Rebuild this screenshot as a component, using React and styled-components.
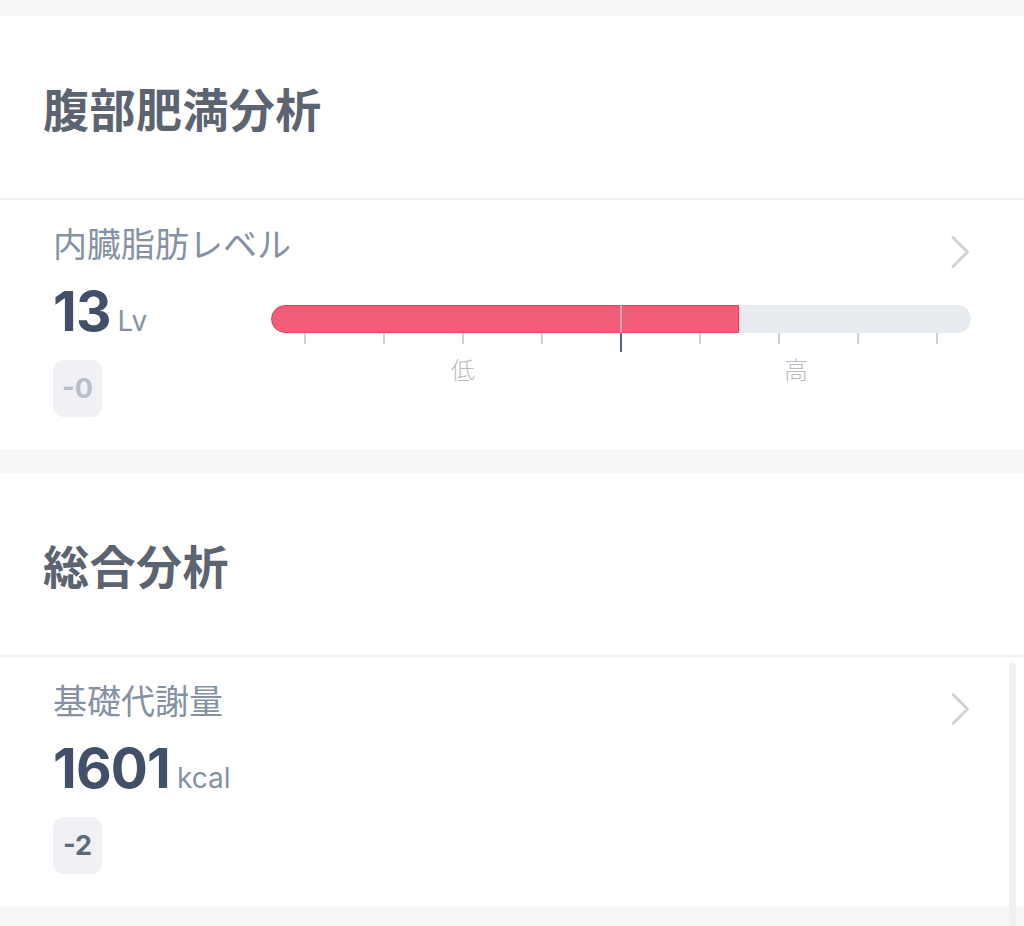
import React from "react";
import styled, { createGlobalStyle } from "styled-components";

const GlobalStyle = createGlobalStyle`
  html, body {
    margin: 0;
    padding: 0;
    background: #fff;
  }
  body {
    font-family: Inter, "Noto Sans CJK JP", sans-serif;
    -webkit-font-smoothing: antialiased;
  }
`;

const Page = styled.div`
  width: 1024px;
  display: flex;
  flex-direction: column;
  background: #fff;
`;

const Gap = styled.div`
  height: ${(props) => props.h}px;
  background: #f5f6f8;
`;

const SectionHeader = styled.div`
  height: 182px;
  display: flex;
  align-items: center;
  padding-left: 43px;
  font-size: 46px;
  font-weight: 700;
  color: #5b6470;
  letter-spacing: 0.01em;
`;

const Divider = styled.div`
  height: 2px;
  background: #eef0f3;
`;

const Card = styled.div`
  height: 250px;
  box-sizing: border-box;
  padding: 23px 53px 0 53px;
  display: flex;
  flex-direction: column;
`;

const CardTop = styled.div`
  display: flex;
  align-items: flex-start;
  justify-content: space-between;
  height: 44px;
`;

const Label = styled.div`
  font-size: 34px;
  font-weight: 400;
  color: #8592a4;
  line-height: 44px;
`;

const ChevronBox = styled.div`
  margin-top: 12px;
  margin-right: -1px;
  display: flex;
`;

const Body = styled.div`
  margin-top: 14px;
  display: flex;
`;

const ValueCol = styled.div`
  width: 218px;
  display: flex;
  flex-direction: column;
  align-items: flex-start;
`;

const Value = styled.div`
  display: flex;
  align-items: baseline;
  line-height: 60px;
  height: 60px;
`;

const Number = styled.span`
  font-size: 55px;
  font-weight: 700;
  color: #424f68;
  letter-spacing: -0.015em;
`;

const Unit = styled.span`
  margin-left: 7px;
  font-size: 28px;
  font-weight: 400;
  color: #8592a4;
`;

const Badge = styled.div`
  margin-top: 19px;
  width: 49px;
  height: 57px;
  border-radius: 11px;
  background: #eff1f4;
  display: flex;
  align-items: center;
  justify-content: center;
  font-size: 27px;
  font-weight: 700;
  color: ${(props) => (props.muted ? "#b8bfc9" : "#5d6a7d")};
`;

const Scale = styled.div`
  flex: 1;
  padding-top: 24px;
`;

const Track = styled.div`
  position: relative;
  height: 28px;
  border-radius: 14px;
  background: #e8ebf0;
  overflow: hidden;
`;

const Fill = styled.div`
  height: 100%;
  box-sizing: border-box;
  background: #f25e78;
  border: 1px solid #e6405f;
  border-radius: 14px 0 0 14px;
`;

const Marker = styled.div`
  position: absolute;
  top: 0;
  bottom: 0;
  width: 2px;
  margin-left: -1px;
  background: #f8a9b8;
`;

const Ticks = styled.div`
  display: flex;
  justify-content: space-between;
  align-items: flex-start;
  padding: 0 33px;
  height: 20px;
`;

const Tick = styled.div`
  width: 2px;
  height: ${(props) => (props.current ? 19 : 11)}px;
  background: ${(props) => (props.current ? "#56627a" : "#cdd1d7")};
`;

const ScaleLabels = styled.div`
  position: relative;
  height: 34px;
  margin-top: 1px;
`;

const ScaleLabel = styled.span`
  position: absolute;
  top: 0;
  transform: translateX(-50%);
  font-size: 24px;
  font-weight: 300;
  color: #b7bdc7;
  line-height: 34px;
`;

const ScrollThumb = styled.div`
  position: fixed;
  right: 8px;
  top: 663px;
  bottom: -10px;
  width: 7px;
  border-radius: 4px;
  background: #f0f0f2;
`;

const Chevron = () => (
  <svg width="22" height="34" viewBox="0 0 22 34">
    <path
      d="M3 2.5 L17.5 17 L3 31.5"
      fill="none"
      stroke="#cfd3d9"
      strokeWidth="3"
      strokeLinecap="round"
      strokeLinejoin="round"
    />
  </svg>
);

const LevelScale = ({ fill, marker, current, labels }) => (
  <Scale>
    <Track>
      <Fill style={{ width: `${fill}%` }} />
      <Marker style={{ left: `${marker}%` }} />
    </Track>
    <Ticks>
      {Array.from({ length: 9 }).map((_, i) => (
        <Tick key={i} current={i === current} />
      ))}
    </Ticks>
    <ScaleLabels>
      {labels.map((l) => (
        <ScaleLabel key={l.text} style={{ left: `${l.at}%` }}>
          {l.text}
        </ScaleLabel>
      ))}
    </ScaleLabels>
  </Scale>
);

const MetricCard = ({ label, value, unit, diff, muted, children }) => (
  <Card>
    <CardTop>
      <Label>{label}</Label>
      <ChevronBox>
        <Chevron />
      </ChevronBox>
    </CardTop>
    <Body>
      <ValueCol>
        <Value>
          <Number>{value}</Number>
          <Unit>{unit}</Unit>
        </Value>
        <Badge muted={muted}>{diff}</Badge>
      </ValueCol>
      {children}
    </Body>
  </Card>
);

const App = () => {
  return (
    <Page>
      <GlobalStyle />
      <Gap h={16} />
      <SectionHeader>腹部肥満分析</SectionHeader>
      <Divider />
      <MetricCard label="内臓脂肪レベル" value="13" unit="Lv" diff="-0" muted>
        <LevelScale
          fill={66.9}
          marker={50}
          current={4}
          labels={[
            { text: "低", at: 27.4 },
            { text: "高", at: 75 },
          ]}
        />
      </MetricCard>
      <Gap h={23} />
      <SectionHeader>総合分析</SectionHeader>
      <Divider />
      <MetricCard label="基礎代謝量" value="1601" unit="kcal" diff="-2" />
      <Gap h={40} />
      <ScrollThumb />
    </Page>
  );
};

export default App;
